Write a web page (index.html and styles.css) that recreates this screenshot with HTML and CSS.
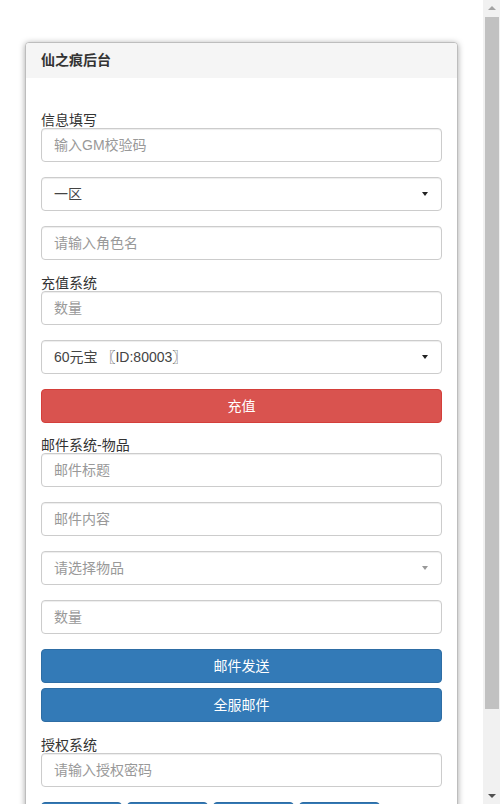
FILE: index.html
```html
<!DOCTYPE html>
<html lang="zh-CN">
<head>
    <meta charset="UTF-8">
    <meta name="viewport" content="width=device-width, initial-scale=1.0">
    <title>仙之痕后台</title>
    <link rel="stylesheet" href="styles.css">
</head>
<body>
    <div class="page">
        <div class="panel">
            <div class="panel-heading">仙之痕后台</div>
            <div class="panel-body">
                <label class="field-label">信息填写</label>
                <input type="text" class="form-control" placeholder="输入GM校验码">
                <div class="select-wrap">
                    <select class="form-control">
                        <option>一区</option>
                        <option>二区</option>
                    </select>
                </div>
                <input type="text" class="form-control" placeholder="请输入角色名">

                <label class="field-label">充值系统</label>
                <input type="text" class="form-control" placeholder="数量">
                <div class="select-wrap">
                    <select class="form-control">
                        <option>60元宝 〖ID:80003〗</option>
                    </select>
                </div>
                <button type="button" class="btn btn-danger tight">充值</button>

                <label class="field-label">邮件系统-物品</label>
                <input type="text" class="form-control" placeholder="邮件标题">
                <input type="text" class="form-control" placeholder="邮件内容">
                <div class="select-wrap muted">
                    <select class="form-control empty">
                        <option>请选择物品</option>
                    </select>
                </div>
                <input type="text" class="form-control" placeholder="数量">
                <button type="button" class="btn btn-primary close">邮件发送</button>
                <button type="button" class="btn btn-primary">全服邮件</button>

                <label class="field-label">授权系统</label>
                <input type="password" class="form-control" placeholder="请输入授权密码">
                <div class="btn-row">
                    <button type="button" class="btn btn-primary">授权</button>
                    <button type="button" class="btn btn-primary">取消</button>
                    <button type="button" class="btn btn-primary">查询</button>
                    <button type="button" class="btn btn-primary">重置</button>
                </div>
            </div>
        </div>
    </div>

    <!-- fake window scrollbar -->
    <div class="scrollbar">
        <span class="arrow up"></span>
        <span class="thumb"></span>
        <span class="arrow down"></span>
    </div>
</body>
</html>
```

FILE: styles.css
```css
html { overflow: hidden; }
body {
    margin: 0;
    background: #fff;
    color: #333;
    font-family: "Liberation Sans", "Noto Sans CJK SC", sans-serif;
    font-size: 14px;
}
.page { width: 483px; padding-top: 42px; }
.panel {
    margin: 0 25px;
    border: 1px solid #bdbdbd;
    border-radius: 4px;
    background: #fff;
    box-shadow: 0 1px 6px rgba(0, 0, 0, 0.35);
}
.panel-heading {
    background: #f5f5f5;
    border-radius: 3px 3px 0 0;
    padding: 8px 15px;
    line-height: 19px;
    font-weight: bold;
    color: #333;
}
.panel-body { padding: 34px 15px 20px; }
.field-label {
    display: block;
    line-height: 16px;
    color: #333;
}
.form-control {
    display: block;
    box-sizing: border-box;
    width: 100%;
    height: 34px;
    margin: 0 0 15px;
    padding: 6px 12px;
    font: inherit;
    line-height: 20px;
    color: #444;
    background: #fff;
    border: 1px solid #ccc;
    border-radius: 4px;
    box-shadow: inset 0 1px 1px rgba(0, 0, 0, 0.075);
    outline: none;
}
.form-control::placeholder { color: #999; }
select.form-control { appearance: none; -webkit-appearance: none; }
select.form-control.empty { color: #999; }
.select-wrap { position: relative; }
.select-wrap::after {
    content: "";
    position: absolute;
    right: 14px;
    top: 15px;
    border-left: 3.5px solid transparent;
    border-right: 3.5px solid transparent;
    border-top: 4px solid #222;
}
.select-wrap.muted::after { border-top-color: #999; }
.btn {
    display: block;
    box-sizing: border-box;
    width: 100%;
    height: 34px;
    margin: 0 0 15px;
    padding: 6px 12px;
    font: inherit;
    line-height: 20px;
    color: #fff;
    border: 1px solid transparent;
    border-radius: 4px;
    cursor: pointer;
}
.btn.tight { margin-bottom: 14px; }
.btn.close { margin-bottom: 5px; }
.btn-danger { background: #d9534f; border-color: #d43f3a; }
.btn-primary { background: #337ab7; border-color: #2e6da4; }
.btn-row { display: flex; gap: 5px; }
.btn-row .btn { width: 81px; margin: 0; }

.scrollbar {
    position: fixed;
    top: 0; right: 0;
    width: 17px; height: 804px;
    background: #f1f1f1;
}
.scrollbar .thumb {
    position: absolute;
    top: 17px; left: 2px;
    width: 14px; height: 692px;
    background: #c1c1c1;
}
.scrollbar .arrow {
    position: absolute;
    left: 5px;
    border-left: 4px solid transparent;
    border-right: 4px solid transparent;
}
.scrollbar .arrow.up { top: 6px; border-bottom: 4px solid #a3a3a3; }
.scrollbar .arrow.down { bottom: 6px; border-top: 4px solid #505050; }
```
